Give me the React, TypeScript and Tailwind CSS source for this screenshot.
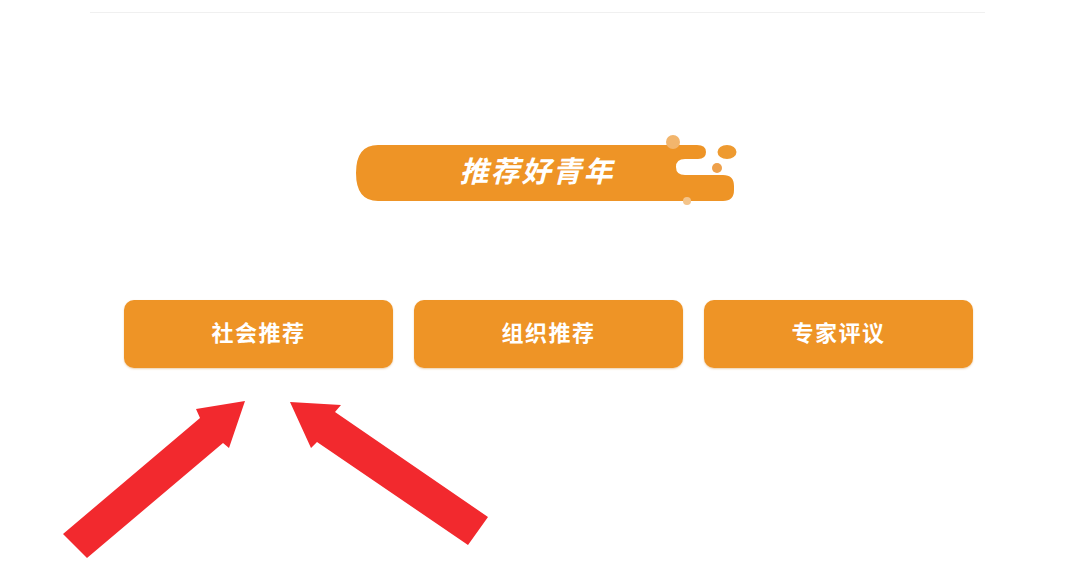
const cjk = { fontFamily: '"Noto Sans CJK SC", "Noto Sans", sans-serif' }

const actions = ["社会推荐", "组织推荐", "专家评议"]

function TitleBanner() {
  return (
    <div className="relative ml-[350px] h-[80px] w-[395px]">
      <svg width="395" height="80" viewBox="0 0 395 80" className="absolute inset-0">
        <path
          d="M28 15 H347 Q356 15 356 22 Q356 29 348 29 H335 Q326 29 326 37 Q326 45 335 45 H373 Q384 45 384 56 V60 Q384 71 373 71 H28 Q6 71 6 43 Q6 15 28 15 Z"
          fill="#ee9426"
        />
        <circle cx="323" cy="12" r="7" fill="#f2b56c" />
        <ellipse cx="377" cy="22" rx="9.5" ry="7" fill="#ee9a30" />
        <circle cx="367" cy="38" r="5" fill="#eea04a" />
        <circle cx="337" cy="71" r="4" fill="#f4c48a" />
      </svg>
      <div className="absolute left-0 top-[12px] flex h-[55px] w-[374px] items-center justify-center">
        <span
          className="text-[29px] font-bold italic leading-none tracking-[2px] text-white"
          style={cjk}
        >
          推荐好青年
        </span>
      </div>
    </div>
  )
}

function Arrows() {
  return (
    <svg
      width="1080"
      height="573"
      viewBox="0 0 1080 573"
      className="pointer-events-none absolute inset-0"
    >
      <polygon
        points="63,534 200,418 196,409 245,401 229,448 223,443 87,558"
        fill="#f2292e"
      />
      <polygon
        points="290,402 341,405 335,412 488,517 468,545 317,442 311,448"
        fill="#f2292e"
      />
    </svg>
  )
}

export default function App() {
  return (
    <div className="relative h-[573px] w-[1080px] overflow-hidden bg-white">
      <div className="ml-[90px] h-[13px] w-[895px] border-b border-[#f0f0f0]" />

      <div className="mt-[117px]">
        <TitleBanner />
      </div>

      <div className="ml-[124px] mt-[90px] grid w-[849px] grid-cols-[269px_269px_269px] justify-between">
        {actions.map((label) => (
          <button
            key={label}
            className="flex h-[68px] items-center justify-center rounded-[10px] bg-[#ee9426] pb-[6px] shadow-[0_1px_2px_rgba(200,120,20,0.35)]"
          >
            <span
              className="text-[22px] font-bold leading-none tracking-[1.5px] text-white"
              style={cjk}
            >
              {label}
            </span>
          </button>
        ))}
      </div>

      <Arrows />
    </div>
  )
}
